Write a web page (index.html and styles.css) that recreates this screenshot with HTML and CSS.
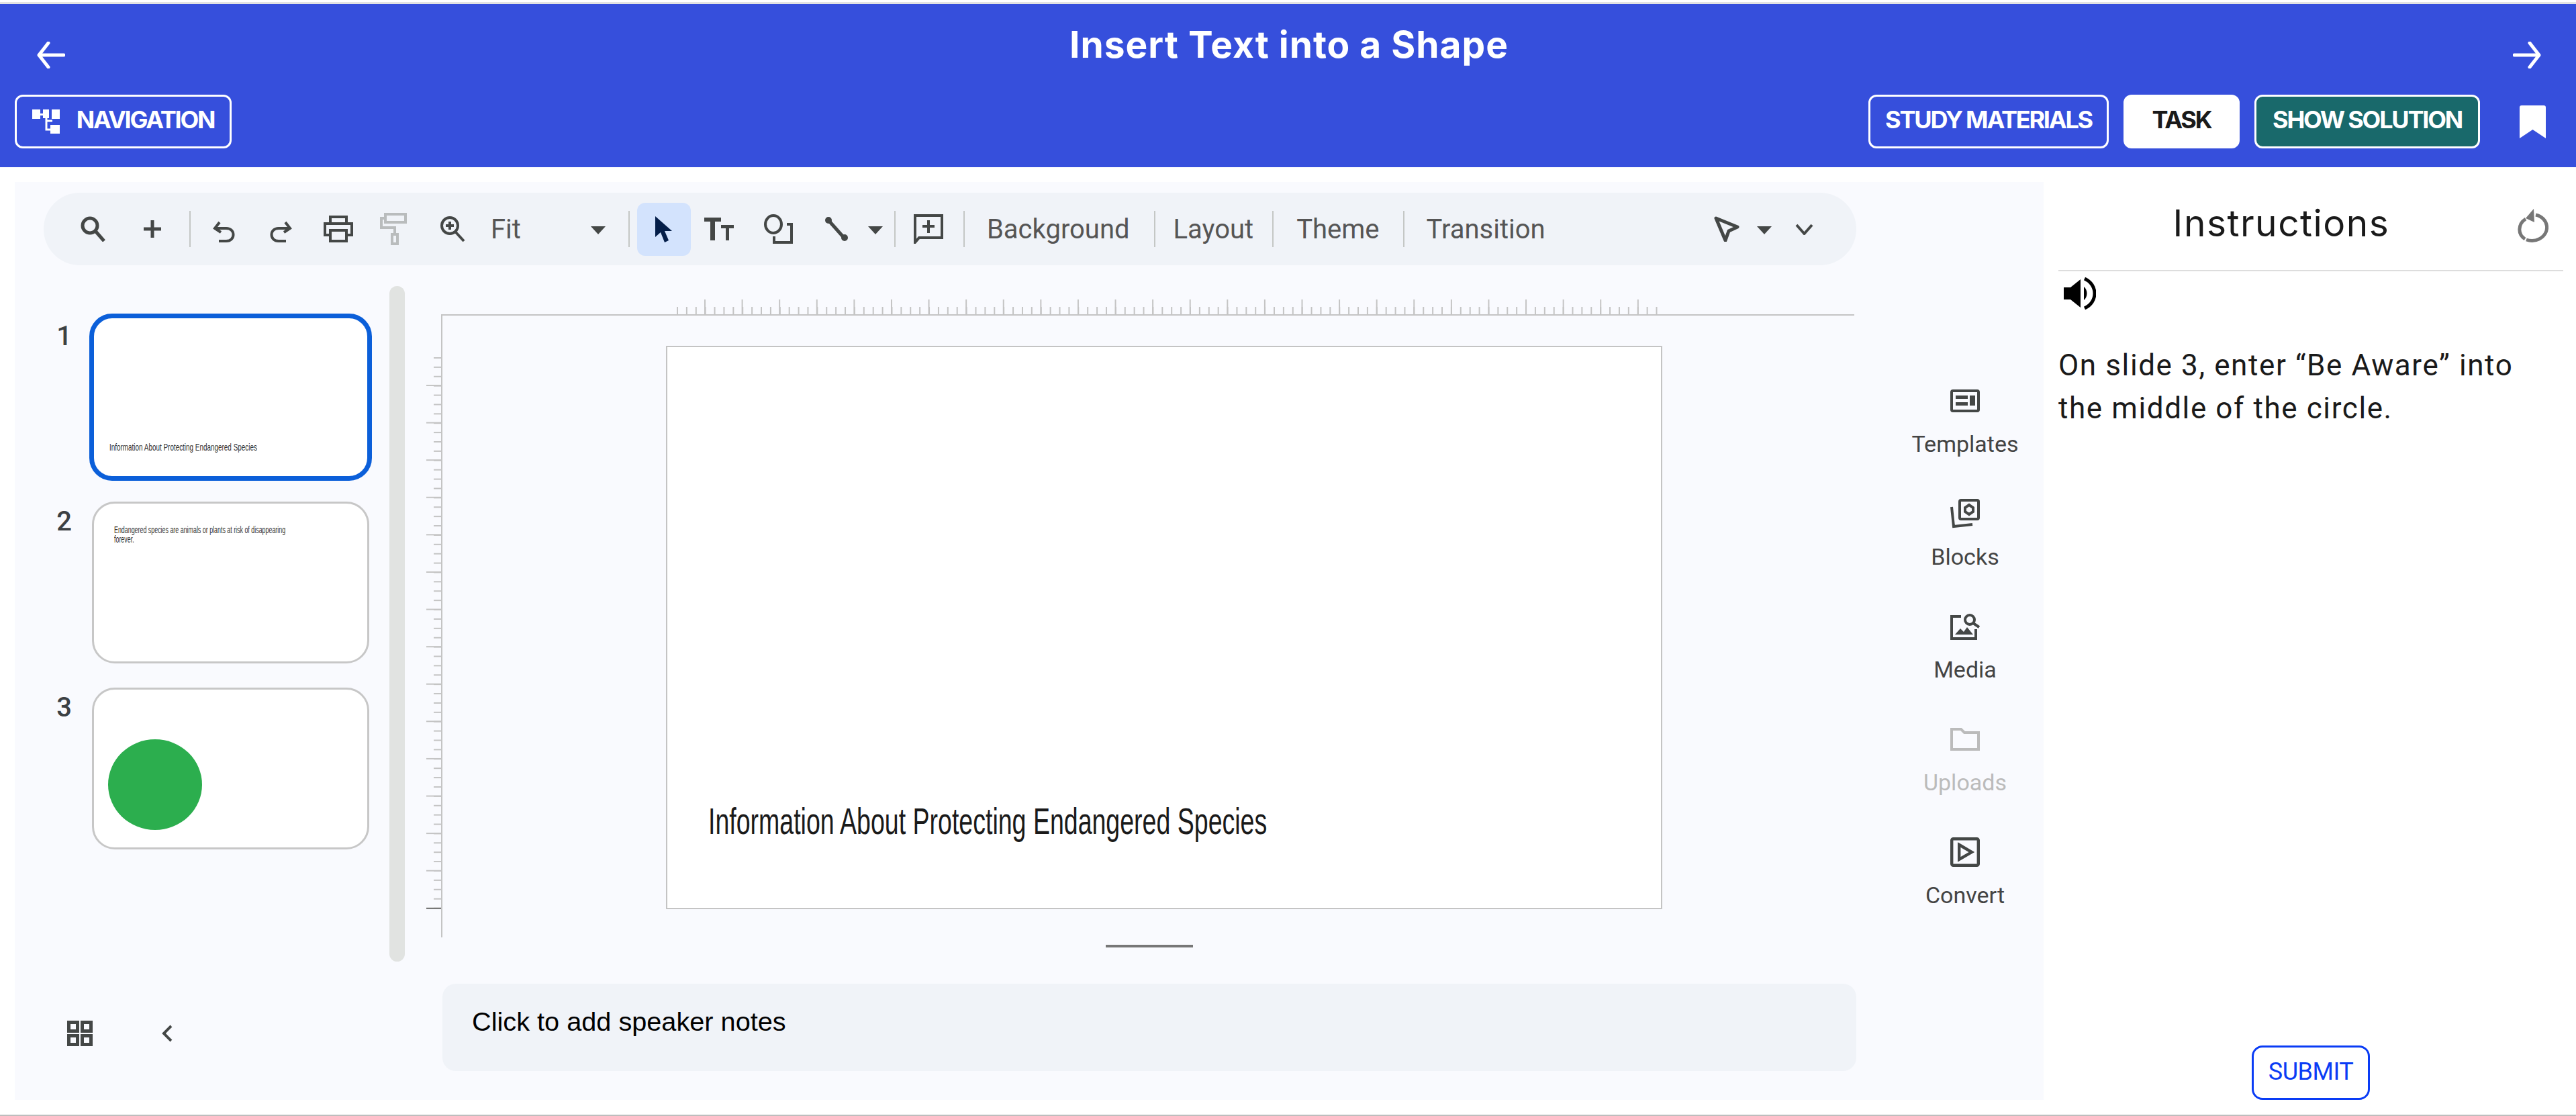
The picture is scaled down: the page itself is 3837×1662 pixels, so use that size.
FILE: index.html
```html
<!DOCTYPE html>
<html lang="en">
<head>
    <meta charset="UTF-8">
    <meta name="viewport" content="width=device-width, initial-scale=1.0">
    <title>Insert Text into a Shape</title>
    <link rel="stylesheet" href="styles.css">
</head>
<body>
    <header class="topbar">
        <div class="title-row">
            <svg class="arrow" viewBox="0 0 42 40"><path d="M40 20H3M17 2 3 20l14 18" /></svg>
            <h1>Insert Text into a Shape</h1>
            <svg class="arrow" viewBox="0 0 42 40"><path d="M2 20h37M25 2l14 18-14 18" /></svg>
        </div>
        <div class="action-row">
            <button class="btn btn-nav">
                <svg class="nav-icon" viewBox="0 0 41 36"><path class="fill" d="M0 0h12v6h4V0h9v13h-9V9h-4v5H0zM29 0h12v14H29zM27 23h14v13H27z" /><path class="line" d="M21 12v18h7M22 17h8" /></svg>
                NAVIGATION
            </button>
            <div class="action-right">
                <button class="btn">STUDY MATERIALS</button>
                <button class="btn btn-task">TASK</button>
                <button class="btn btn-solution">SHOW SOLUTION</button>
                <svg class="bookmark" viewBox="0 0 39 49"><path d="M3 0h33a3 3 0 0 1 3 3v46L19.500 36 0 49V3a3 3 0 0 1 3-3z" /></svg>
            </div>
        </div>
    </header>

    <main class="main">
        <section class="workspace">
            <div class="toolbar">
                <svg class="ico" style="width:38px;margin-left:54px" viewBox="0 0 38 38"><circle cx="15" cy="14" r="11" /><path d="M23 22l13 15" /></svg>
                <svg class="ico" style="width:28px;margin-left:56px" viewBox="0 0 28 28"><path d="M14 1v26M1 14h26" /></svg>
                <span class="sep" style="margin-left:41px"></span>
                <svg class="ico ico-thin ico-low" style="width:34px;margin-left:33px" viewBox="0 0 34 32"><path d="M10 2 3 11l9 6M4 11h16c14 0 14 19 0 19H9" /></svg>
                <svg class="ico ico-thin ico-low" style="width:34px;margin-left:50px" viewBox="0 0 34 32"><path d="M24 2l7 9-9 6M30 11H14C0 11 0 30 14 30h11" /></svg>
                <svg class="ico ico-thin" style="width:44px;margin-left:47px" viewBox="0 0 44 40"><path d="M10 12V2h24v10M10 29H2V12h40v17h-8M10 22h24v16H10z" /></svg>
                <svg class="ico ico-off" style="width:40px;margin-left:40px" viewBox="0 0 40 48"><path d="M8 2h30v12H8zM8 8H2v14h20v10" /><rect x="18" y="32" width="8" height="14" /></svg>
                <svg class="ico ico-thin" style="width:38px;margin-left:49px" viewBox="0 0 38 38"><circle cx="15" cy="14" r="12" /><path d="M24 24l12 13M15 8v12M9 14h12" /></svg>
                <span class="tool-text fit">Fit</span>
                <span class="caret" style="margin-left:104px"></span>
                <span class="sep" style="margin-left:34px"></span>
                <span class="tool-on">
                    <svg class="cursor" viewBox="0 0 30 43"><path d="M2 2v31l8-7 6 15 6-3-6-14h11z" /></svg>
                </span>
                <svg class="ico ico-solid" style="width:44px;margin-left:20px" viewBox="0 0 44 34"><path d="M0 0h25v6h-9v28H9V6H0zM25 11h19v5h-7v18h-5V16h-7z" /></svg>
                <svg class="ico ico-thin" style="width:44px;margin-left:45px" viewBox="0 0 44 44"><ellipse cx="14" cy="15" rx="12" ry="13" /><path d="M34 15h7v27H15v-9" /></svg>
                <svg class="ico ico-line" style="width:38px;margin-left:45px" viewBox="0 0 38 38"><path d="M7 6l24 27" /><circle class="dot" cx="7" cy="6" r="5" /><circle class="dot" cx="31" cy="32" r="5" /></svg>
                <span class="caret" style="margin-left:28px"></span>
                <span class="sep" style="margin-left:17px"></span>
                <svg class="ico ico-thin" style="width:44px;margin-left:27px" viewBox="0 0 44 44"><path d="M2 2h40v33H8l-6 7zM22 9v19M13 18h18" /></svg>
                <span class="sep" style="margin-left:30px"></span>
                <span class="tool-text" style="margin-left:33px">Background</span>
                <span class="sep" style="margin-left:36px"></span>
                <span class="tool-text" style="margin-left:27px">Layout</span>
                <span class="sep" style="margin-left:28px"></span>
                <span class="tool-text" style="margin-left:34px">Theme</span>
                <span class="sep" style="margin-left:35px"></span>
                <span class="tool-text" style="margin-left:33px">Transition</span>
                <svg class="ico ico-thin ico-round" style="width:38px;margin-left:251px" viewBox="0 0 38 38"><path d="M3 3l32 13-13 6-5 14z" /></svg>
                <span class="caret" style="margin-left:26px"></span>
                <svg class="ico ico-thin" style="width:27px;margin-left:35px" viewBox="0 0 27 17"><path d="M2 2l11.500 13L25 2" /></svg>
            </div>

            <div class="editor">
                <aside class="strip">
                    <div class="strip-scroll">
                        <ol class="thumbs">
                            <li class="thumb-row">
                                <span class="thumb-num">1</span>
                                <div class="thumb thumb-active"><p class="thumb-title">Information About Protecting Endangered Species</p></div>
                            </li>
                            <li class="thumb-row">
                                <span class="thumb-num">2</span>
                                <div class="thumb thumb-body"><p>Endangered species are animals or plants at risk of disappearing forever.</p></div>
                            </li>
                            <li class="thumb-row">
                                <span class="thumb-num">3</span>
                                <div class="thumb thumb-shape"><div class="green-circle"></div></div>
                            </li>
                        </ol>
                        <div class="scrollbar"></div>
                    </div>
                    <div class="strip-foot">
                        <svg class="grid-icon" viewBox="0 0 38 38"><path d="M2.500 2.500h13v13h-13zM22.500 2.500h13v13h-13zM2.500 22.500h13v13h-13zM22.500 22.500h13v13h-13z" /></svg>
                        <svg class="chevron-left" viewBox="0 0 16 26"><path d="M14 2 3 13l11 11" /></svg>
                    </div>
                </aside>

                <div class="stage">
                    <div class="ruler-top"><div class="ticks-h"></div></div>
                    <div class="canvas">
                        <div class="ticks-v"></div>
                        <div class="slide"><p>Information About Protecting Endangered Species</p></div>
                    </div>
                    <div class="handle"></div>
                    <div class="notes">Click to add speaker notes</div>
                </div>

                <nav class="side-tools">
                    <div class="side-tool">
                        <svg class="side-icon" viewBox="0 0 44 34"><rect x="2" y="2" width="40" height="30" rx="2" /><path class="solid" d="M8 9h18v5H8zM8 19h18v5H8zM29 9h8v15h-8z" /></svg>
                        <span>Templates</span>
                    </div>
                    <div class="side-tool">
                        <svg class="side-icon" viewBox="0 0 44 44"><rect x="14" y="2" width="28" height="28" rx="2" /><path d="M2 12l3 29 28-3" /><path d="M28 9l6 4v6l-6 4-6-4v-6z" /></svg>
                        <span>Blocks</span>
                    </div>
                    <div class="side-tool">
                        <svg class="side-icon" viewBox="0 0 44 40"><path d="M16 5H2v33h36V24" /><circle cx="29" cy="10" r="7" /><path d="M34 15l9 6" /><path class="solid" d="M7 32l8-9 5 5 5-7 9 11z" /></svg>
                        <span>Media</span>
                    </div>
                    <div class="side-tool tool-off">
                        <svg class="side-icon" viewBox="0 0 44 34"><path d="M2 2h14l5 5h21v25H2z" /></svg>
                        <span>Uploads</span>
                    </div>
                    <div class="side-tool">
                        <svg class="side-icon" viewBox="0 0 40 40"><rect x="2" y="2" width="36" height="36" rx="2" /><path d="M12 10l17 10-17 10z" /></svg>
                        <span>Convert</span>
                    </div>
                </nav>
            </div>
        </section>

        <section class="instructions">
            <div class="inst-head">
                <h2>Instructions</h2>
                <svg class="reset" viewBox="0 0 46 50"><path d="M27 9c19 4 23 27 5 36-6 3-13 3-19 1M12 15C0 23 0 38 11 45" /><path class="solid" d="M24 0 12 14l13 6z" /></svg>
            </div>
            <svg class="speaker" viewBox="0 0 48 48"><path class="solid" d="M0 15h10L25 3v42L10 33H0zM30 14c6 5 6 15 0 20z" /><path d="M31 2c20 9 20 35 0 44" /></svg>
            <p class="inst-text">On slide 3, enter “Be Aware” into the middle of the circle.</p>
            <button class="submit">SUBMIT</button>
        </section>
    </main>
</body>
</html>
```

FILE: styles.css
```css
/* Page */
* {
    box-sizing: border-box;
}

body {
    margin: 0;
    width: 3837px;
    height: 1662px;
    overflow: hidden;
    background: #fff;
    font-family: Inter, Roboto, sans-serif;
    border-bottom: 2px solid #bdbdbd;
}

/* Blue bar */
.topbar {
    margin-top: 6px;
    height: 243px;
    background: #364fdc;
    box-shadow: 0 -3px 0 #e3e3e3;
    color: #fff;
    padding: 0 22px;
}

.title-row {
    display: flex;
    align-items: center;
    justify-content: space-between;
    height: 135px;
    padding: 16px 30px 0 33px;
}

.title-row h1 {
    margin: 0 0 31px;
    font-size: 55px;
    font-weight: 700;
    letter-spacing: 1px;
}

.arrow {
    width: 42px;
    height: 40px;
    fill: none;
    stroke: #fff;
    stroke-width: 5;
    stroke-linecap: round;
    stroke-linejoin: round;
}

.action-row {
    display: flex;
    justify-content: space-between;
}

.action-right {
    display: flex;
    align-items: center;
    gap: 22px;
    padding-right: 23px;
}

.btn {
    display: flex;
    align-items: center;
    justify-content: center;
    height: 80px;
    padding: 0 0 6px;
    width: 358px;
    border: 3px solid #fff;
    border-radius: 12px;
    background: transparent;
    color: #fff;
    font-family: Inter, sans-serif;
    font-size: 36px;
    font-weight: 700;
    letter-spacing: -2.2px;
}

.btn-nav {
    width: 323px;
    gap: 25px;
}

.nav-icon {
    width: 41px;
    height: 36px;
    margin-top: 6px;
}

.nav-icon .fill {
    fill: #fff;
}

.nav-icon .line {
    fill: none;
    stroke: #fff;
    stroke-width: 3;
}

.btn-task {
    width: 173px;
    background: #fff;
    color: #1a1a1a;
}

.btn-solution {
    width: 336px;
    background: #19696b;
}

.bookmark {
    width: 39px;
    height: 49px;
    margin-left: 37px;
    fill: #fff;
}

/* Main area */
.main {
    display: flex;
    margin-top: 22px;
    height: 1367px;
    padding-left: 22px;
}

.workspace {
    width: 3022px;
    background: #f9fafe;
    padding-top: 16px;
    flex-shrink: 0;
}

.toolbar {
    display: flex;
    align-items: center;
    width: 2700px;
    height: 108px;
    margin-left: 43px;
    background: #f0f3f8;
    border-radius: 54px;
}

.ico {
    height: auto;
    flex-shrink: 0;
    fill: none;
    stroke: #444746;
    stroke-width: 5;
}

.ico-thin {
    stroke-width: 4;
}

.ico-low {
    margin-top: 8px;
}

.ico-round {
    stroke-linejoin: round;
    stroke-width: 5;
}

.ico-off {
    stroke: #b9bcbd;
    stroke-width: 4;
}

.ico-solid {
    fill: #444746;
    stroke: none;
}

.ico-line {
    stroke-width: 5;
    stroke-linecap: round;
}

.ico-line .dot {
    fill: #444746;
    stroke: none;
}

.sep {
    width: 2px;
    height: 54px;
    background: #c4c7c5;
    flex-shrink: 0;
}

.tool-text {
    font-family: Roboto, sans-serif;
    font-size: 40px;
    color: #555;
    white-space: nowrap;
}

.fit {
    margin-left: 38px;
}

.caret {
    width: 0;
    height: 0;
    margin-top: 4px;
    border-left: 11px solid transparent;
    border-right: 11px solid transparent;
    border-top: 12px solid #444746;
    flex-shrink: 0;
}

.tool-on {
    display: flex;
    align-items: center;
    justify-content: center;
    width: 80px;
    height: 79px;
    margin-left: 11px;
    background: #d3e3fd;
    border-radius: 12px;
    flex-shrink: 0;
}

.cursor {
    width: 30px;
    height: 43px;
    fill: #041e49;
}

.editor {
    display: grid;
    grid-template-columns: 613px 2130px 1fr;
    height: 1243px;
}

/* Slide strip */
.strip-scroll {
    display: flex;
    height: 1037px;
    padding-top: 31px;
}

.thumbs {
    list-style: none;
    margin: 0;
    padding: 41px 0 0;
    width: 558px;
}

.thumb-row {
    display: flex;
    height: 277px;
}

.thumb-row:first-child {
    height: 280px;
}

.thumb-num {
    width: 115px;
    padding: 10px 30px 0 0;
    text-align: right;
    font-family: Roboto, sans-serif;
    font-size: 40px;
    font-weight: 500;
    color: #3c4043;
    line-height: 1;
}

.thumb-row:first-child .thumb-num {
    padding-top: 14px;
}

.thumb {
    width: 413px;
    height: 241px;
    border: 3px solid #c7c7c7;
    border-radius: 34px;
    background: #fff;
}

.thumb-active {
    width: 421px;
    height: 249px;
    margin: 0 0 0 -4px;
    border: 7px solid #0b5fd9;
    display: flex;
    align-items: flex-end;
    padding: 0 0 36px 23px;
}

.thumb p {
    margin: 0;
    font-family: "Liberation Sans", sans-serif;
    font-size: 14.800px;
    line-height: 14px;
    color: #333;
    transform: scaleX(0.67);
    transform-origin: left top;
}

.thumb-title {
    white-space: nowrap;
}

.thumb-body {
    padding: 32px 0 0 30px;
}

.thumb-body p {
    width: 430px;
    transform: scaleX(0.6);
}

.thumb-shape {
    padding: 74px 0 0 21px;
}

.green-circle {
    width: 140px;
    height: 135px;
    border-radius: 50%;
    background: #2cae4e;
}

.scrollbar {
    width: 23px;
    height: 1006px;
    background: #e1e3e1;
    border-radius: 12px;
}

.strip-foot {
    display: flex;
    align-items: center;
    gap: 103px;
    padding: 88px 0 0 78px;
}

.grid-icon {
    width: 38px;
    height: 38px;
    fill: none;
    stroke: #444746;
    stroke-width: 5;
}

.chevron-left {
    width: 16px;
    height: 26px;
    fill: none;
    stroke: #444746;
    stroke-width: 4;
}

/* Stage with rulers */
.ruler-top {
    margin: 51px 3px 0 22px;
    height: 24px;
    border-bottom: 2px solid #c4c4c4;
    padding-left: 351px;
}

.ticks-h {
    width: 1462px;
    height: 22px;
    background-image:
        linear-gradient(to right, #c4c4c4 2px, transparent 2px),
        linear-gradient(to right, #c4c4c4 2px, transparent 2px);
    background-size: 55.600px 22px, 13.900px 11px;
    background-position: 41px 0, 0 bottom;
    background-repeat: repeat-x;
}

.canvas {
    position: relative;
    display: flex;
    height: 926px;
    margin-left: 22px;
    border-left: 2px solid #c4c4c4;
    padding: 45px 0 0 333px;
}

.ticks-v {
    position: absolute;
    left: -24px;
    top: 62px;
    width: 22px;
    height: 822px;
    background-image:
        linear-gradient(#777, #777),
        linear-gradient(#c4c4c4 2px, transparent 2px),
        linear-gradient(#c4c4c4 2px, transparent 2px);
    background-size: 22px 2px, 22px 55.600px, 11px 13.900px;
    background-position: 0 bottom, 0 41px, right 0;
    background-repeat: no-repeat, repeat-y, repeat-y;
}

.slide {
    display: flex;
    align-items: flex-end;
    width: 1484px;
    height: 839px;
    border: 2px solid #c4c4c4;
    background: #fff;
    padding: 0 0 97px 61px;
}

.slide p {
    margin: 0;
    font-family: "Liberation Sans", sans-serif;
    font-size: 56px;
    color: #1a1a1a;
    white-space: nowrap;
    transform: scaleX(0.67);
    transform-origin: left center;
}

.handle {
    width: 130px;
    height: 4px;
    margin: 11px 0 0 1012px;
    background: #777;
}

.notes {
    display: flex;
    align-items: center;
    height: 130px;
    margin: 54px 0 0 24px;
    padding: 0 0 18px 44px;
    background: #f0f3f8;
    border-radius: 20px;
    font-family: "Liberation Sans", Arial, sans-serif;
    font-size: 39.700px;
    color: #000;
}

/* Tools on the right of the stage */
.side-tools {
    display: flex;
    flex-direction: column;
    padding: 180px 0 0 45px;
    width: 279px;
}

.side-tool {
    display: flex;
    flex-direction: column;
    align-items: center;
    height: 168px;
    font-family: Roboto, sans-serif;
    font-size: 34px;
    color: #444;
    gap: 22px;
}

.side-icon {
    width: 44px;
    height: 44px;
    fill: none;
    stroke: #444746;
    stroke-width: 4;
}

.side-icon .solid {
    fill: #444746;
    stroke: none;
}

.tool-off {
    color: #bbb;
}

.tool-off .side-icon {
    stroke: #bbb;
}

/* Instructions panel */
.instructions {
    display: flex;
    flex-direction: column;
    flex: 1;
    padding: 0 19px 0 22px;
}

.inst-head {
    display: flex;
    align-items: center;
    justify-content: center;
    position: relative;
    height: 133px;
    padding-right: 88px;
    border-bottom: 2px solid #ddd;
}

.inst-head h2 {
    margin: 0;
    font-size: 55px;
    font-weight: 400;
    letter-spacing: 1.5px;
    color: #1a1a1a;
    padding-bottom: 10px;
}

.reset {
    position: absolute;
    right: 22px;
    top: 40px;
    width: 46px;
    height: 50px;
    fill: none;
    stroke: #777;
    stroke-width: 5;
}

.reset .solid {
    fill: #777;
    stroke: none;
}

.speaker {
    width: 48px;
    height: 48px;
    margin: 9px 0 0 8px;
    fill: none;
    stroke: #000;
    stroke-width: 5;
    flex-shrink: 0;
}

.speaker .solid {
    fill: #000;
    stroke: none;
}

.inst-text {
    max-width: 720px;
    margin: 51px 0 0;
    font-family: Roboto, sans-serif;
    font-size: 44px;
    line-height: 64px;
    letter-spacing: 1.6px;
    color: #1a1a1a;
}

.submit {
    align-self: center;
    margin-top: auto;
    width: 176px;
    height: 81px;
    padding: 0 0 4px;
    border: 3px solid #0a3cf5;
    border-radius: 16px;
    background: #fff;
    color: #0a3cf5;
    font-family: Roboto, sans-serif;
    font-size: 36px;
    letter-spacing: -0.5px;
}
```
